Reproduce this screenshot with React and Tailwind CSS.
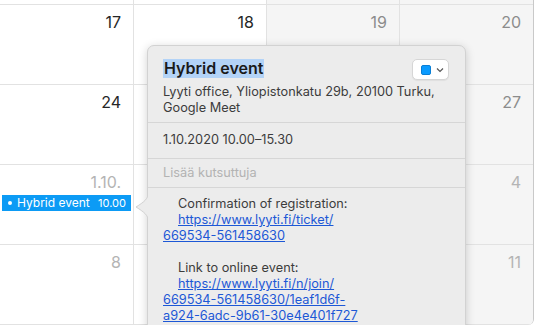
import React from "react";

const font = { fontFamily: 'Inter, "Liberation Sans", Arial, sans-serif' };

function Cell({ num, tone = "dark", weekend, children, last }) {
  const color =
    tone === "dark" ? "text-[#262626]" : tone === "mid" ? "text-[#8c8c8c]" : "text-[#b4b4b4]";
  return (
    <div
      className={`relative h-[80px] border-b border-[#e2e2e2] ${last ? "" : "border-r"} ${
        weekend ? "bg-[#f5f5f5]" : "bg-white"
      }`}
    >
      <div className={`flex justify-end pr-[12px] pt-[7px] text-[16px] leading-[20px] ${color}`}>{num}</div>
      {children}
    </div>
  );
}

export default function App() {
  return (
    <div className="relative w-[536px] h-[325px] overflow-hidden bg-white" style={font}>
      <div className="w-[534px] h-[325px] border-r border-[#c9c9c9] rounded-br-[6px] overflow-hidden">
        <div className="grid grid-cols-[134px_133px_133px_133px]">
          <div className="h-[5px] border-b border-r border-[#e2e2e2]" />
          <div className="h-[5px] border-b border-r border-[#e2e2e2]" />
          <div className="h-[5px] border-b border-r border-[#e2e2e2] bg-[#f5f5f5]" />
          <div className="h-[5px] border-b border-[#e2e2e2] bg-[#f5f5f5]" />

          <Cell num="17" />
          <Cell num="18" />
          <Cell num="19" tone="mid" weekend />
          <Cell num="20" tone="mid" weekend last />

          <Cell num="24" />
          <Cell num="25" />
          <Cell num="26" tone="mid" weekend />
          <Cell num="27" tone="mid" weekend last />

          <Cell num="1.10." tone="light">
            <div className="mx-[2px] mt-[3px] h-[16px] bg-[#0c9bf5] text-white flex items-center text-[12px] pl-[6px] pr-[5px]">
              <span className="w-[4px] h-[4px] rounded-full bg-white mr-[5px]" />
              <span>Hybrid event</span>
              <span className="ml-auto text-[11px]">10.00</span>
            </div>
          </Cell>
          <Cell num="2" tone="light" />
          <Cell num="3" tone="light" weekend />
          <Cell num="4" tone="light" weekend last />

          <Cell num="8" tone="light" />
          <Cell num="9" tone="light" />
          <Cell num="10" tone="light" weekend />
          <Cell num="11" tone="light" weekend last />
        </div>
      </div>

      {/* Popover */}
      <div className="absolute left-[147px] top-[45px] w-[319px] h-[300px] rounded-[7px] bg-[#ececec] border border-[#d2d2d2] shadow-[0_2px_10px_rgba(0,0,0,0.18)] text-[12.75px] leading-[16px] text-[#3c3c3c]">
        <svg
          className="absolute left-[-13px] top-[147px]"
          width="14"
          height="28"
          viewBox="0 0 14 28"
        >
          <path d="M13.5 0 C13 6 9 9 1 14 C9 19 13 22 13.5 28 Z" fill="#ececec" stroke="#d2d2d2" strokeWidth="1" />
          <rect x="13" y="0" width="2" height="28" fill="#ececec" />
        </svg>

        <div className="px-[15px] pt-[12px] pb-[6px]">
          <div className="flex items-start justify-between">
            <span className="mt-[1px] bg-[#b3d3f7] px-[1px] text-[16px] leading-[19px] font-semibold text-[#1a1a1a]">
              Hybrid event
            </span>
            <div className="mt-[1px] mr-[1px] w-[37px] h-[21px] rounded-[5px] bg-white border border-[#d6d6d6] shadow-[0_1px_1px_rgba(0,0,0,0.06)] flex items-center pl-[8px] gap-[5px]">
              <span className="w-[10px] h-[10px] rounded-[2px] bg-[#0a9bff] border border-[#0a7fd6]" />
              <svg width="8" height="6" viewBox="0 0 8 6">
                <path d="M1 1.5 L4 4.5 L7 1.5" fill="none" stroke="#555" strokeWidth="1.2" />
              </svg>
            </div>
          </div>
          <div className="mt-[4px]">
            Lyyti office, Yliopistonkatu 29b, 20100 Turku,
            <br />
            Google Meet
          </div>
        </div>
        <div className="border-t border-[#d6d6d6] px-[15px] pt-[9px] pb-[10px]">1.10.2020 10.00–15.30</div>
        <div className="border-t border-[#d6d6d6] px-[15px] pt-[6px] pb-[6px] text-[#b3b3b3]">Lisää kutsuttuja</div>
        <div className="border-t border-[#d6d6d6] px-[15px] pt-[8px]">
          <div className="pl-[15px]">Confirmation of registration:</div>
          <div className="pl-[15px]">
            <a className="text-[#1d58d6] underline">https://www.lyyti.fi/ticket/</a>
          </div>
          <div>
            <a className="text-[#1d58d6] underline">669534-561458630</a>
          </div>
          <div className="h-[16px]" />
          <div className="pl-[15px]">Link to online event:</div>
          <div className="pl-[15px]">
            <a className="text-[#1d58d6] underline">https://www.lyyti.fi/n/join/</a>
          </div>
          <div>
            <a className="text-[#1d58d6] underline">669534-561458630/1eaf1d6f-</a>
          </div>
          <div>
            <a className="text-[#1d58d6] underline">a924-6adc-9b61-30e4e401f727</a>
          </div>
        </div>
      </div>
    </div>
  );
}
